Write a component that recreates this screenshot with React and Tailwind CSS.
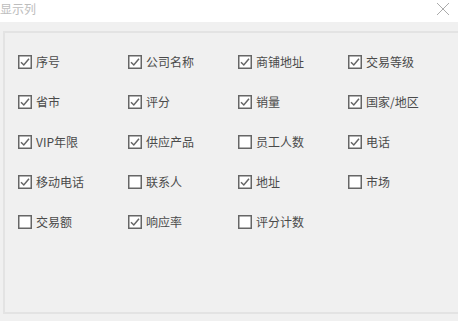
import React from 'react';

const items = [
  ['序号', true], ['公司名称', true], ['商铺地址', true], ['交易等级', true],
  ['省市', true], ['评分', true], ['销量', true], ['国家/地区', true],
  ['VIP年限', true], ['供应产品', true], ['员工人数', false], ['电话', true],
  ['移动电话', true], ['联系人', false], ['地址', true], ['市场', false],
  ['交易额', false], ['响应率', true], ['评分计数', false],
];

function Box({ checked }) {
  return (
    <svg width="14" height="14" viewBox="0 0 14 14" className="shrink-0">
      <rect x="0.75" y="0.75" width="12.5" height="12.5" fill="#fff" stroke="#666" strokeWidth="1.5" />
      {checked && (
        <path d="M3 7.2 L5.8 10 L11 3.8" fill="none" stroke="#666" strokeWidth="1.5" />
      )}
    </svg>
  );
}

export default function App() {
  return (
    <div
      className="w-[458px] h-[321px] bg-white flex flex-col overflow-hidden"
      style={{ fontFamily: '"Noto Sans CJK SC", "Noto Sans", sans-serif' }}
    >
      {/* Titelleiste */}
      <div className="h-[22px] flex items-center justify-between shrink-0">
        <span className="text-[12px] text-[#bdbdbd] leading-none -mt-[4px]">显示列</span>
        <svg width="14" height="14" viewBox="0 0 14 14" className="mr-[8px] -mt-[4px]">
          <path d="M1 1 L13 13 M13 1 L1 13" stroke="#ababab" strokeWidth="1" />
        </svg>
      </div>

      <div className="flex-1 bg-[#f0f0f0] pt-[9px] pl-[3px] pr-[6px] pb-[7px] flex">
        <div className="flex-1 border-2 border-[#e3e3e3] pt-[9px] pl-[13px]">
          <div className="grid grid-cols-[110px_110px_110px_110px] auto-rows-[40px]">
            {items.map(([label, checked]) => (
              <div key={label} className="flex items-center gap-[4px]">
                <Box checked={checked} />
                <span className="text-[12px] text-[#4a4a4a] leading-none">{label}</span>
              </div>
            ))}
          </div>
        </div>
      </div>
    </div>
  );
}
